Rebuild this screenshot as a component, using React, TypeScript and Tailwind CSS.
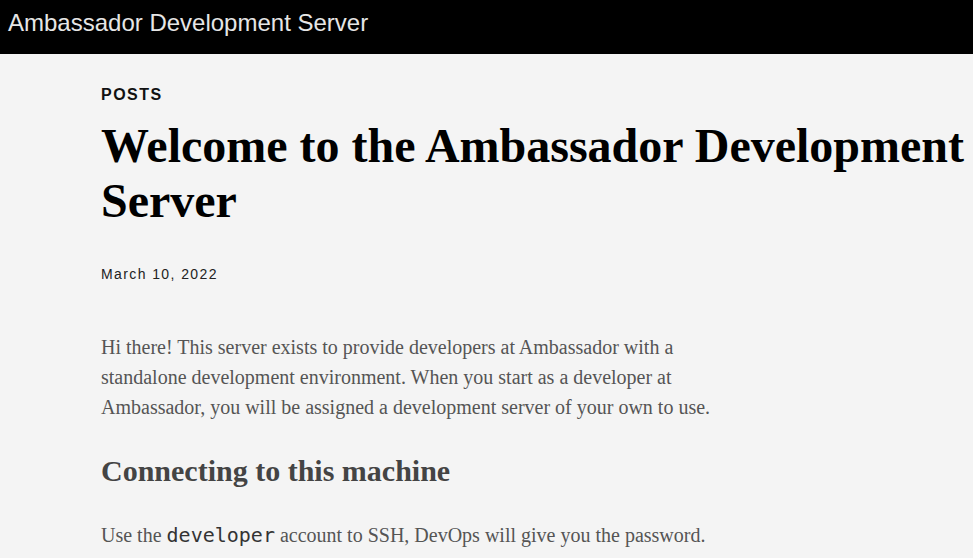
export default function App() {
  return (
    <div className="min-h-[558px] bg-[#f4f4f4]">
      {/* Top bar */}
      <header className="h-[54px] bg-black px-2 pt-[8px]">
        <span className="block font-['Liberation_Sans',Arial,sans-serif] text-[24px] leading-[30px] text-[#e6e6e6]">
          Ambassador Development Server
        </span>
      </header>

      <main className="pl-[101px] pr-2 pt-[26px]">
        <div className="font-['Liberation_Sans',Arial,sans-serif] text-[16px] font-bold leading-[30px] tracking-[1.5px] text-[#111]">
          POSTS
        </div>

        <h1 className="mt-[8px] font-['Liberation_Serif','Times_New_Roman',serif] text-[48px] font-bold leading-[55px] text-black">
          Welcome to the Ambassador Development Server
        </h1>

        <div className="mt-[36px] font-['Liberation_Sans',Arial,sans-serif] text-[14px] leading-[20px] tracking-[1.4px] text-[#222]">
          March 10, 2022
        </div>

        <div className="mt-[48px] max-w-[620px] font-['Liberation_Serif','Times_New_Roman',serif] text-[20px] leading-[30px] text-[#555]">
          <p>
            Hi there! This server exists to provide developers at Ambassador with a standalone
            development environment. When you start as a developer at Ambassador, you will be
            assigned a development server of your own to use.
          </p>

          <h2 className="mt-[29px] text-[30px] font-bold leading-[40px] text-[#444]">
            Connecting to this machine
          </h2>

          <p className="mt-[29px]">
            Use the{' '}
            <code className="font-['DejaVu_Sans_Mono','Liberation_Mono',monospace] text-[20px] text-[#333]">
              developer
            </code>{' '}
            account to SSH, DevOps will give you the password.
          </p>
        </div>
      </main>
    </div>
  );
}
